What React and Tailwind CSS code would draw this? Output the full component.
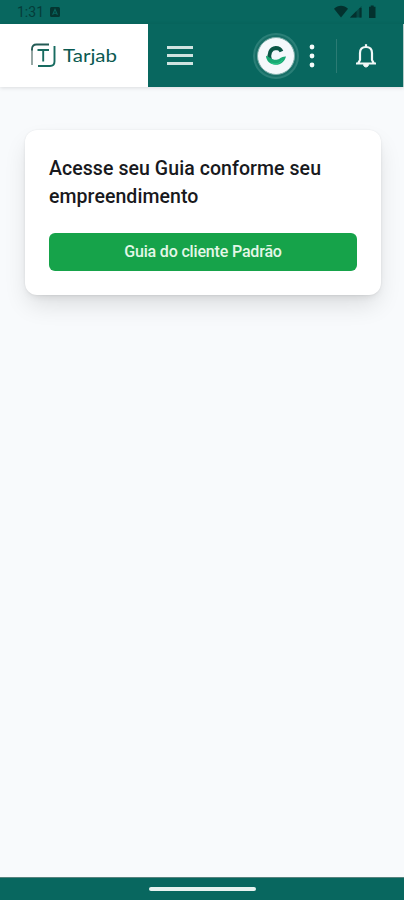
import React from 'react';

function StatusBar() {
  return (
    <div className="flex h-6 items-center justify-between bg-[#08675f] pl-[17px] pr-[26px] text-[#053c39]">
      <div className="flex items-center gap-[6px]">
        <span className="text-[14px] leading-6">1:31</span>
        <svg width="10" height="10" viewBox="0 0 10 10">
          <rect width="10" height="10" rx="1.5" fill="#053631" />
          <path d="M2.6 7.8 5 2.3l2.4 5.5M3.5 6.2h3" fill="none" stroke="#08675f" strokeWidth="1.1" />
        </svg>
      </div>
      <svg width="44" height="14" viewBox="0 0 44 14" fill="#03312e">
        <path d="M0 3.8C4-.3 10-.3 14 3.8L7 12.5Z" />
        <path d="M27.5 1v11.5H16Z" opacity="0.55" />
        <path d="M22.5 6v6.5H16Z" />
        <path d="M25.5 3h2v9.5h-2Z" />
        <path d="M35 1.8h1.7V.5h3v1.3h1.8V13H35Z" />
      </svg>
    </div>
  );
}

function Logo() {
  return (
    <div className="flex h-full w-[148px] items-center gap-[7px] bg-white pl-[31px] text-[#0b5a51]">
      <svg width="25" height="25" viewBox="0 0 25 25" fill="none">
        <path d="M1 22V6" stroke="#7d918e" strokeWidth="1.6" />
        <path d="M1 7.5V6q0-4.5 4.5-4.5H18" stroke="#235b55" strokeWidth="1.8" />
        <path d="M23.5 3v15.5q0 4.5-4.5 4.5H7" stroke="#176b60" strokeWidth="1.9" />
        <path d="M6.5 7H18M12.2 7v11.5" stroke="#176b60" strokeWidth="1.9" />
      </svg>
      <svg width="60" height="25" viewBox="0 0 60 25" fill="currentColor">
        <text x="0" y="18.5" textLength="54" lengthAdjust="spacingAndGlyphs" className="font-['Lato',sans-serif] text-[18px]">Tarjab</text>
      </svg>
    </div>
  );
}

function Header() {
  return (
    <header className="flex h-[63px] items-center border-r border-[#b5cecb] bg-[#08675f] text-white shadow-[0_1px_4px_rgba(0,0,0,0.12)]">
      <Logo />
      <button className="ml-[19px] flex w-[26px] flex-col gap-[5px]" aria-label="Menu">
        <span className="h-[3px] w-full bg-[#d0e3e0]" />
        <span className="h-[3px] w-full bg-[#d0e3e0]" />
        <span className="h-[3px] w-full bg-[#d0e3e0]" />
      </button>

      <div className="ml-auto flex items-center pr-[26px]">
        <div className="flex size-[46px] items-center justify-center rounded-full border-2 border-[#2a7f77] bg-[#176f67]">
          <div className="flex size-[38px] items-center justify-center rounded-full border border-[#7fb0ab] bg-[#f4f8fb]">
            <svg width="22" height="21" viewBox="0 0 22 21" fill="none">
              <path d="M5 14.5C3.3 9.5 5.2 3.5 10.8 3c3 0 4.8 1.3 5.7 3.5" stroke="#0a5545" strokeWidth="3.8" />
              <path d="M1 10.8C4.5 11.8 7 15.2 11.5 14.8c3.2-.3 4.5-3.6 9.5-3.3-1.3 5-5.2 8.3-10 8.3C5.2 19.8 1.2 16 1 10.8Z" fill="#18a873" />
              <path d="M6 18c4.5 1.6 9 .2 11.5-3" stroke="#27c487" strokeWidth="1.2" />
            </svg>
          </div>
        </div>
        <svg className="ml-[10px]" width="6" height="24" viewBox="0 0 6 24" fill="#f4fbfa">
          <circle cx="3" cy="3" r="2.4" />
          <circle cx="3" cy="12" r="2.4" />
          <circle cx="3" cy="21" r="2.4" />
        </svg>
        <div className="ml-[21px] h-[34px] w-px bg-[#2b7b74]" />
        <svg className="ml-[18px]" width="22" height="26" viewBox="0 0 22 26" fill="none" stroke="#f1f8f7" strokeWidth="2.2">
          <path d="M1 20.5h20M3 20.5l2-3.5v-7C5 6.1 7.3 4 11 4s6 2.1 6 6v7l2 3.5" strokeLinejoin="round" />
          <path d="M11 1.2V4" />
          <path d="M8.5 21.5c0 3.3 5 3.3 5 0Z" fill="#f1f8f7" strokeWidth="1" />
        </svg>
      </div>
    </header>
  );
}

function App() {
  return (
    <div className="flex h-screen flex-col overflow-hidden bg-[#f8fafc] font-['Roboto',sans-serif]">
      <StatusBar />
      <Header />

      <main className="flex-1 pl-[25px] pr-[23px] pt-[43px]">
        <section className="rounded-xl bg-white p-6 shadow-[0_0_2px_rgba(0,0,0,0.08),0_12px_24px_-3px_rgba(0,0,0,0.12),0_4px_8px_-4px_rgba(0,0,0,0.12)]">
          <h1 className="whitespace-nowrap pt-px text-[19.5px] font-medium leading-7 tracking-[0.07px] text-[#18191d]">
            Acesse seu Guia conforme seu
            <br />
            empreendimento
          </h1>
          <button className="mt-[22px] flex h-[38px] w-full items-center justify-center rounded-md bg-[#16a34a] text-[16px] font-medium tracking-[-0.17px] text-[#e3f7e7]">
            Guia do cliente Padrão
          </button>
        </section>
      </main>

      <footer className="flex h-[23px] items-center justify-center border-t border-[#58837e] bg-[#08675f]">
        <div className="h-1 w-[107px] rounded-full bg-[#e7f2f0]" />
      </footer>
    </div>
  );
}

export default App;
